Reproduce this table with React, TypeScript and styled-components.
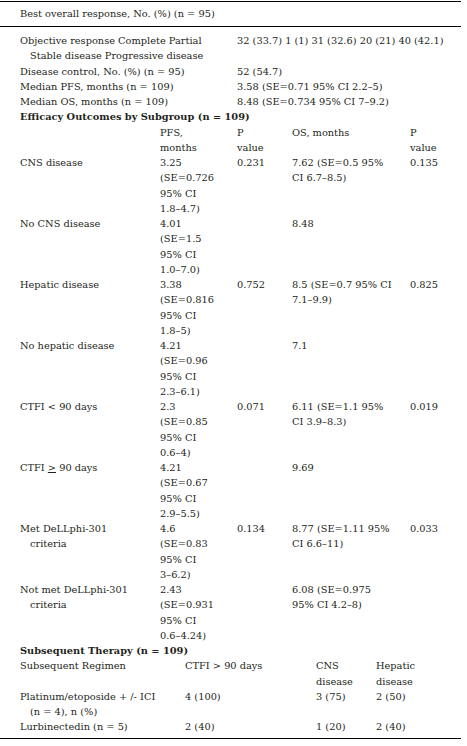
import React from "react";
import styled, { createGlobalStyle } from "styled-components";

const GlobalStyle = createGlobalStyle`
  html, body { margin: 0; padding: 0; background: #ffffff; }
  body {
    font-family: "DejaVu Serif", "Liberation Serif", serif;
    font-size: 9.8px;
    color: #231f20;
  }
`;

const Table = styled.div`
  width: 461px;
  padding-top: 1px;
  border-bottom: 1px solid #000;
  padding-bottom: 3px;
`;

const Caption = styled.div`
  border-top: 1px solid #000;
  border-bottom: 1px solid #000;
  padding: 4px 0 5px 20px;
  line-height: 15px;
  margin-bottom: 6px;
`;

const Grid = styled.div<{ $cols: string }>`
  display: grid;
  grid-template-columns: ${(p) => p.$cols};
  padding-left: 20px;
  line-height: 15.25px;
`;

const Cell = styled.div`
  white-space: pre;
`;

const Label = styled(Cell)`
  padding-left: 10px;
  text-indent: -10px;
`;

const Title = styled.div`
  grid-column: 1 / -1;
  font-weight: 700;
  white-space: nowrap;
`;

const Geq = styled.span`
  text-decoration: underline;
`;

type Row = { label: React.ReactNode; cells: string[] };

const summary: Row[] = [
  {
    label: "Objective response Complete Partial\nStable disease Progressive disease",
    cells: ["32 (33.7) 1 (1) 31 (32.6) 20 (21) 40 (42.1)"],
  },
  { label: "Disease control, No. (%) (n = 95)", cells: ["52 (54.7)"] },
  { label: "Median PFS, months (n = 109)", cells: ["3.58 (SE=0.71 95% CI 2.2–5)"] },
  { label: "Median OS, months (n = 109)", cells: ["8.48 (SE=0.734 95% CI 7–9.2)"] },
];

const subgroup: Row[] = [
  { label: "", cells: ["PFS,\nmonths", "P\nvalue", "OS, months", "P\nvalue"] },
  { label: "CNS disease", cells: ["3.25\n(SE=0.726\n95% CI\n1.8–4.7)", "0.231", "7.62 (SE=0.5 95%\nCI 6.7–8.5)", "0.135"] },
  { label: "No CNS disease", cells: ["4.01\n(SE=1.5\n95% CI\n1.0–7.0)", "", "8.48", ""] },
  { label: "Hepatic disease", cells: ["3.38\n(SE=0.816\n95% CI\n1.8–5)", "0.752", "8.5 (SE=0.7 95% CI\n7.1–9.9)", "0.825"] },
  { label: "No hepatic disease", cells: ["4.21\n(SE=0.96\n95% CI\n2.3–6.1)", "", "7.1", ""] },
  { label: "CTFI < 90 days", cells: ["2.3\n(SE=0.85\n95% CI\n0.6–4)", "0.071", "6.11 (SE=1.1 95%\nCI 3.9–8.3)", "0.019"] },
  {
    label: (
      <>
        CTFI <Geq>&gt;</Geq> 90 days
      </>
    ),
    cells: ["4.21\n(SE=0.67\n95% CI\n2.9–5.5)", "", "9.69", ""],
  },
  { label: "Met DeLLphi-301\ncriteria", cells: ["4.6\n(SE=0.83\n95% CI\n3–6.2)", "0.134", "8.77 (SE=1.11 95%\nCI 6.6–11)", "0.033"] },
  { label: "Not met DeLLphi-301\ncriteria", cells: ["2.43\n(SE=0.931\n95% CI\n0.6–4.24)", "", "6.08 (SE=0.975\n95% CI 4.2–8)", ""] },
];

const therapy: Row[] = [
  { label: "Subsequent Regimen", cells: ["CTFI > 90 days", "CNS\ndisease", "Hepatic\ndisease"] },
  { label: "Platinum/etoposide + /- ICI\n(n = 4), n (%)", cells: ["4 (100)", "3 (75)", "2 (50)"] },
  { label: "Lurbinectedin (n = 5)", cells: ["2 (40)", "1 (20)", "2 (40)"] },
];

const renderRows = (rows: Row[]) =>
  rows.map((r, i) => (
    <React.Fragment key={i}>
      <Label>{r.label}</Label>
      {r.cells.map((c, j) => (
        <Cell key={j}>{c}</Cell>
      ))}
    </React.Fragment>
  ));

export default function App() {
  return (
    <>
      <GlobalStyle />
      <Table>
        <Caption>Best overall response, No. (%) (n = 95)</Caption>
        <Grid $cols="217px 1fr">
          {renderRows(summary)}
          <Title>Efficacy Outcomes by Subgroup (n = 109)</Title>
        </Grid>
        <Grid $cols="140px 77px 55px 118px 1fr">{renderRows(subgroup)}</Grid>
        <Grid $cols="165px 131px 60px 1fr">
          <Title>Subsequent Therapy (n = 109)</Title>
          {renderRows(therapy)}
        </Grid>
      </Table>
    </>
  );
}
